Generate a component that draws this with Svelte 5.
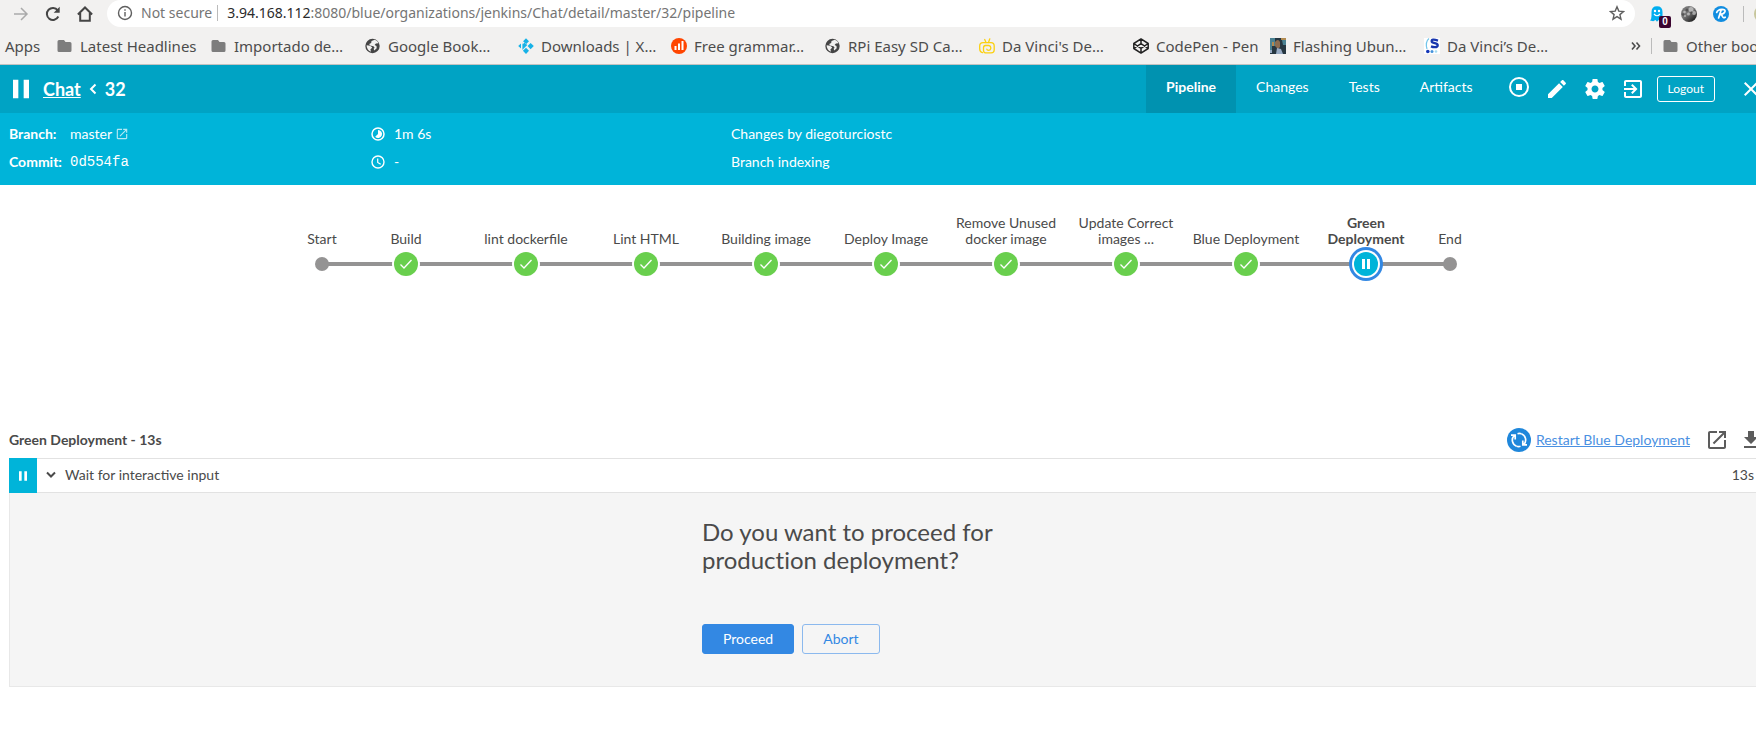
<script>
  const bookmarks = [
    { icon: 'folder', label: 'Latest Headlines' },
    { icon: 'folder', label: 'Importado de…' },
    { icon: 'globe', label: 'Google Book…' },
    { icon: 'kodi', label: 'Downloads | X…' },
    { icon: 'chart', label: 'Free grammar…' },
    { icon: 'globe', label: 'RPi Easy SD Ca…' },
    { icon: 'tv', label: "Da Vinci's De…" },
    { icon: 'codepen', label: 'CodePen - Pen' },
    { icon: 'photo', label: 'Flashing Ubun…' },
    { icon: 'sletter', label: 'Da Vinci’s De…' },
  ];

  const tabs = ['Pipeline', 'Changes', 'Tests', 'Artifacts'];
  let activeTab = $state('Pipeline');

  const stages = [
    { name: 'Start', kind: 'dot' },
    { name: 'Build', kind: 'done' },
    { name: 'lint dockerfile', kind: 'done' },
    { name: 'Lint HTML', kind: 'done' },
    { name: 'Building image', kind: 'done' },
    { name: 'Deploy Image', kind: 'done' },
    { name: 'Remove Unused docker image', kind: 'done' },
    { name: 'Update Correct images ...', kind: 'done' },
    { name: 'Blue Deployment', kind: 'done' },
    { name: 'Green Deployment', kind: 'paused' },
    { name: 'End', kind: 'dot' },
  ];

  const launch =
    'M19 19H5V5h7V3H5c-1.11 0-2 .9-2 2v14c0 1.1.89 2 2 2h14c1.1 0 2-.9 2-2v-7h-2v7zM14 3v2h3.59l-9.83 9.83 1.41 1.41L19 6.41V10h2V3h-7z';
  const pause = 'M6 19h4V5H6v14zm8-14v14h4V5h-4z';
</script>

{#snippet bookmarkIcon(kind)}
  <svg class="bm-icon" viewBox="0 0 16 16" aria-hidden="true">
    {#if kind === 'folder'}
      <path fill="#7d7d7d" d="M2 2h5l1.500 2H13q1.500 0 1.500 1.500V12.500q0 1.500-1.500 1.500H2Q.5 14 .5 12.500V3.500Q.5 2 2 2z" />
    {:else if kind === 'globe'}
      <circle cx="7.500" cy="8" r="7.200" fill="#454545" />
      <path fill="#f2f1f0" d="M1.600 7.200 5 7.700l2.200 1.500-.8 1.300-1 .8.600 2.500Q1.600 12 1.600 7.200zM6.500 3l3.300-1.300q2.800.9 3.800 3.600l-2.700.1-1.300 1.700 1.900 1 .2 2.200-2.400 2.300-.7-1.900 1-1-1.100-1.400L5 7.500 4.200 6l2-.9z" />
    {:else if kind === 'kodi'}
      <g fill="#17b2e7">
        <path d="m8 .2 3 3-3 3.100-2.900-3.100zM12.600 5l3.200 3.100-3.200 3.100-3-3.100zM8 9.800l3 3-3 3.100-3.100-3.100zM4.400 4v7.900L6 10.300 9.300 7 6.600 4.400 4.700 6.300zM3 5.500v5L.2 8z" />
      </g>
    {:else if kind === 'chart'}
      <circle cx="8" cy="8" r="8" fill="#ff4500" />
      <path stroke="#fff" stroke-width="2" d="M4.500 8v4M8 5.500V12M11.500 3v9" />
    {:else if kind === 'tv'}
      <g fill="none" stroke="#fbd010" stroke-width="1.300" stroke-linecap="round">
        <path d="M3.500 14.700Q.7 14 .7 11V8Q.7 4.800 4 4.700h8q3.200.1 3.200 3.300v4q0 2.800-3 2.900H6.500q-2-.3-2-2.700V9.700q0-2 2-2.200h3.300q2 .3 2 2.200v.7q-.2 1.800-2 1.900-1.900 0-2-1.200" />
        <path d="M5.700 1.500 7 4.500M10.800.8 9.500 4.500" />
      </g>
    {:else if kind === 'codepen'}
      <path fill="none" stroke="#222" stroke-width="1.500" stroke-linejoin="round" d="M8 .9 15.200 5.500v5L8 15.100.8 10.500v-5zM.8 5.500 8 10.300l7.200-4.800M.8 10.500 8 5.700l7.200 4.800M8 .9v4.800M8 10.300v4.800" />
    {:else if kind === 'photo'}
      <path fill="#263640" d="M0 0h16v16H0z" />
      <path fill="#4a8192" d="M0 0h5v8H2v4H0zM12 2h4v5h-3z" />
      <path fill="#8c6c50" d="M5 4q3-4 5 0v5l-2 2-3-3z" />
      <path fill="#98abc4" d="m7 10 4 1 2 5H6zM0 12h2v3H0z" />
      <path fill="#b18b52" d="M11 0h5v2h-5zM2 4h2v4H2z" />
    {:else if kind === 'sletter'}
      <path fill="#fff" d="M0 0h16v16H0z" />
      <path fill="none" stroke="#72c5ea" stroke-width="1.200" d="M5 .5Q1 4 3 11" />
      <path fill="none" stroke="#1a37ae" stroke-width="2.300" d="M14 2.600Q7.500.4 7.700 3.300c.2 2.400 6.300 1.300 6 4-.2 2.600-4.500 2-6.700 1.100" />
      <circle cx="3.800" cy="13.500" r="1.800" fill="#1437b8" /><circle cx="8" cy="13.500" r="1.500" fill="#4492dc" /><circle cx="12" cy="13.500" r="1.300" fill="#a5dcf2" />
    {/if}
  </svg>
{/snippet}

{#snippet glyph(d, size)}
  <svg class="glyph" width={size} height={size} viewBox="0 0 24 24" aria-hidden="true"><path fill="currentColor" {d} /></svg>
{/snippet}

<div class="page">
  <div class="browser">
    <div class="toolbar">
      <button class="tool muted" aria-label="Forward">
        <svg viewBox="0 0 16 16"><path d="M1 8h13M8 2l6 6-6 6" /></svg>
      </button>
      <button class="tool" aria-label="Reload">
        <svg viewBox="0 0 16 16"><path d="M13.300 10.500A6 6 0 1 1 12.700 4.300" /><path class="solid" d="M14.700.7v6h-6z" /></svg>
      </button>
      <button class="tool" aria-label="Home">
        <svg viewBox="0 0 16 16"><path d="M.9 8.500 8 1.500l7.100 7M3.200 7v7.700h9.600V7" /></svg>
      </button>
      <div class="omnibox">
        <svg class="info" viewBox="0 0 16 16" aria-hidden="true">
          <circle cx="8" cy="8" r="6.500" /><path d="M8 7v4.500M8 4.300v1.500" />
        </svg>
        <span class="security">Not secure</span>
        <span class="rule"></span>
        <span class="url"><b>3.94.168.112</b>:8080/blue/organizations/jenkins/Chat/detail/master/32/pipeline</span>
        <svg class="star" viewBox="0 0 16 16" aria-hidden="true">
          <path d="m8 1.800 1.800 4.300 4.700.4-3.600 3.100 1.100 4.600L8 11.700l-4 2.500 1.100-4.600-3.600-3.100 4.700-.4z" />
        </svg>
      </div>
      <div class="extensions">
        <span class="ext ghost">
          <svg viewBox="0 0 16 16" aria-hidden="true">
            <path fill="#00aef0" d="M2.500 6Q2.500.3 8 .3T13.500 6v8l-2 1.700L9.500 14 8 15.700 6.500 14l-2.300 1.200L1 14.500Q2.500 13 2.500 10z" />
            <circle cx="6" cy="5" r="1.200" fill="#fff" /><circle cx="10" cy="5" r="1.200" fill="#fff" />
            <path fill="none" stroke="#fff" stroke-width="1.200" d="M5 8q3 3.500 6 0" />
          </svg>
          <span class="badge">0</span>
        </span>
        <span class="ext">
          <svg viewBox="0 0 16 16" aria-hidden="true">
            <defs>
              <linearGradient id="moon" x1="0" y1="0" x2=".8" y2="1"><stop offset="0" stop-color="#777" /><stop offset=".5" stop-color="#777" /><stop offset="1" stop-color="#161616" /></linearGradient>
            </defs>
            <circle cx="8" cy="8" r="8" fill="url(#moon)" />
            <g fill="#ddd" opacity=".6"><circle cx="10" cy="3.500" r="2.500" /><circle cx="13" cy="7" r="2" /><circle cx="3.500" cy="6" r="1.300" /><circle cx="7.500" cy="8" r="1.500" /><circle cx="4" cy="10" r="1" /></g>
            <g fill="#333" opacity=".5"><circle cx="6" cy="4" r="1.500" /><circle cx="10.500" cy="6.500" r="1.200" /><circle cx="2" cy="8.500" r="1.200" /></g>
          </svg>
        </span>
        <span class="ext">
          <svg viewBox="0 0 16 16" aria-hidden="true">
            <circle cx="8" cy="8" r="8" fill="#118de0" />
            <path fill="none" stroke="#fff" stroke-width="1.700" stroke-linecap="round" stroke-linejoin="round" d="M3.700 6.500Q4.500 3.600 9 3.300q3.500 0 3 2.300-.7 2.500-4.700 2.700 1.800.4 2.200 2.200.8 2 2.700.7M8 4.500 5.600 12" />
          </svg>
        </span>
        <span class="rule"></span>
        <span class="avatar"></span>
      </div>
    </div>

    <nav class="bookmarks" aria-label="Bookmarks">
      <a href="#apps">Apps</a>
      {#each bookmarks as item}
        <a href="#bookmark">{@render bookmarkIcon(item.icon)}{item.label}</a>
      {/each}
      <span class="spacer"></span>
      <button class="more" aria-label="More bookmarks">
        <svg viewBox="0 0 10 10"><path d="m1 1.500 3 3.500-3 3.500M5.500 1.500l3 3.500-3 3.500" /></svg>
      </button>
      <span class="rule"></span>
      <a href="#other">{@render bookmarkIcon('folder')}Other boo</a>
    </nav>
  </div>

  <header class="run-header">
    {@render glyph(pause, 32)}
    <h1>
      <a href="#chat">Chat</a>
      <svg class="crumb" viewBox="0 0 8 12" aria-hidden="true"><path d="M6.500 1.500 2 6l4.500 4.500" /></svg>
      <span>32</span>
    </h1>
    <nav class="tabs" aria-label="Run">
      {#each tabs as tab}
        <a href="#{tab}" class:active={tab === activeTab} onclick={() => (activeTab = tab)}>{tab}</a>
      {/each}
    </nav>
    <div class="actions">
      <button class="icon stop" aria-label="Stop">
        <svg width="24" height="24" viewBox="0 0 24 24"><circle cx="12" cy="12" r="9" fill="none" stroke="#fff" stroke-width="2" /><path fill="#fff" d="M9 9h6v6H9z" /></svg>
      </button>
      <button class="icon" aria-label="Edit">
        {@render glyph('M3 17.250V21h3.750L17.810 9.940l-3.750-3.750L3 17.250zM20.710 7.040c.39-.39.39-1.020 0-1.410l-2.340-2.340c-.39-.39-1.020-.39-1.410 0l-1.830 1.830 3.750 3.750 1.830-1.830z', 24)}
      </button>
      <button class="icon" aria-label="Settings">
        {@render glyph('M19.430 12.980c.04-.32.07-.64.07-.98s-.03-.66-.07-.98l2.110-1.650c.19-.15.24-.42.12-.64l-2-3.460c-.12-.22-.39-.3-.61-.22l-2.490 1c-.52-.4-1.080-.73-1.690-.98l-.38-2.650C14.460 2.180 14.250 2 14 2h-4c-.25 0-.46.18-.49.42l-.38 2.650c-.61.25-1.170.59-1.690.98l-2.490-1c-.23-.09-.49 0-.61.22l-2 3.460c-.13.22-.07.49.12.64l2.110 1.650c-.04.32-.07.65-.07.98s.03.66.07.98l-2.110 1.650c-.19.15-.24.42-.12.64l2 3.460c.12.22.39.3.61.22l2.490-1c.52.4 1.080.73 1.690.98l.38 2.650c.03.24.24.42.49.42h4c.25 0 .46-.18.49-.42l.38-2.650c.61-.25 1.170-.59 1.690-.98l2.490 1c.23.09.49 0 .61-.22l2-3.460c.12-.22.07-.49-.12-.64l-2.110-1.650zM12 15.500c-1.930 0-3.500-1.570-3.500-3.500s1.570-3.500 3.500-3.500 3.500 1.570 3.500 3.500-1.570 3.500-3.500 3.500z', 24)}
      </button>
      <button class="icon" aria-label="Classic view">
        {@render glyph('M10.090 15.590L11.500 17l5-5-5-5-1.410 1.410L12.670 11H3v2h9.670l-2.580 2.590zM19 3H5c-1.110 0-2 .9-2 2v4h2V5h14v14H5v-4H3v4c0 1.100.89 2 2 2h14c1.100 0 2-.9 2-2V5c0-1.100-.9-2-2-2z', 24)}
      </button>
      <button class="logout">Logout</button>
      <button class="icon close" aria-label="Close">
        {@render glyph('M19 6.410L17.590 5 12 10.590 6.410 5 5 6.410 10.590 12 5 17.590 6.410 19 12 13.410 17.590 19 19 17.590 13.410 12z', 24)}
      </button>
    </div>
  </header>

  <section class="meta">
    <dl>
      <dt>Branch:</dt>
      <dd>master <a href="#branch" aria-label="Open branch">{@render glyph(launch, 14)}</a></dd>
      <dt>Commit:</dt>
      <dd><code>0d554fa</code></dd>
    </dl>
    <div class="times">
      <p>
        <svg width="16" height="16" viewBox="0 0 16 16" aria-hidden="true"><circle cx="8" cy="8" r="6" fill="none" stroke="#fff" stroke-width="1.500" /><path fill="#fff" d="M8 4a4 4 0 1 1-2.800 6.800L8 8z" /></svg>
        1m 6s
      </p>
      <p>
        <svg width="16" height="16" viewBox="0 0 16 16" aria-hidden="true"><g fill="none" stroke="#fff"><circle cx="8" cy="8" r="6" stroke-width="1.400" /><path stroke-width="1.200" d="M7.700 4.500v4l3 1.800" /></g></svg>
        -
      </p>
    </div>
    <div>
      <p>Changes by diegoturciostc</p>
      <p>Branch indexing</p>
    </div>
  </section>

  <ol class="graph">
    {#each stages as stage}
      <li class={stage.kind}>
        <span class="label">{stage.name}</span>
        <span class="track">
          <span class="node">
            {#if stage.kind === 'done'}
              <svg width="24" height="24" viewBox="0 0 24 24" aria-hidden="true"><path fill="none" stroke="#fff" stroke-width="1.300" d="m6.500 12.500 3.500 3.500 7.500-8" /></svg>
            {:else if stage.kind === 'paused'}
              <svg width="24" height="24" viewBox="0 0 24 24" aria-hidden="true"><path fill="#fff" d="M8 7h3v10H8zM13 7h3v10h-3z" /></svg>
            {/if}
          </span>
        </span>
      </li>
    {/each}
  </ol>

  <main>
    <div class="step-head">
      <h2>Green Deployment - 13s</h2>
      <a class="restart" href="#restart">
        <svg width="24" height="24" viewBox="0 0 24 24" aria-hidden="true">
          <circle cx="12" cy="12" r="12" fill="#1f87db" />
          <g fill="none" stroke="#fff" stroke-width="1.700">
            <path d="M9.500 18.200A6.600 6.600 0 0 1 7 7.700M4 7.200h4.200v4.300M14.500 5.800A6.600 6.600 0 0 1 17 16.300M20 16.900h-4.200v-4.400" />
            <path d="M10.500 5.700q2-.6 4 .1M13.500 18.300q-2 .6-4-.1" />
          </g>
        </svg>
        <span>Restart Blue Deployment</span>
      </a>
      <a class="tool-link" href="#open" aria-label="Open log">{@render glyph(launch, 24)}</a>
      <a class="tool-link last" href="#download" aria-label="Download log">{@render glyph('M19 9h-4V3H9v6H5l7 7 7-7zM5 18v2h14v-2H5z', 24)}</a>
    </div>

    <div class="step">
      <span class="status">{@render glyph(pause, 16)}</span>
      <button class="toggle">
        <svg width="10" height="8" viewBox="0 0 10 8" aria-hidden="true"><path d="m1 1.500 4 4 4-4" /></svg>
        <span>Wait for interactive input</span>
      </button>
      <span class="duration">13s</span>
    </div>

    <div class="panel">
      <form onsubmit={(e) => e.preventDefault()}>
        <h3>Do you want to proceed for production deployment?</h3>
        <div class="buttons">
          <button class="primary" type="submit">Proceed</button>
          <button class="secondary" type="button">Abort</button>
        </div>
      </form>
    </div>
  </main>
</div>

<style>
  :global(body) {
    overflow-x: hidden;
    background: #fff;
  }
  .page {
    width: calc(100% + 16px);
    font: 14px/20px Lato, sans-serif;
    color: #4a4a4a;
  }
  .page :is(h1, h2, h3, p, dl, dd, ol) {
    margin: 0;
    padding: 0;
  }
  a {
    color: inherit;
    text-decoration: none;
  }
  button {
    padding: 0;
    border: 0;
    background: none;
    color: inherit;
    font: inherit;
    cursor: pointer;
  }
  svg {
    display: block;
    flex: none;
  }

  .browser {
    background: #f2f1f0;
    border-bottom: 1px solid #c3c2c1;
    color: #4c4c4c;
    font: 14px/20px "Noto Sans", "Open Sans", sans-serif;
  }
  .toolbar {
    display: flex;
    align-items: center;
    height: 27px;
    padding-left: 13px;
    gap: 16px;
  }
  .tool svg {
    width: 16px;
    height: 16px;
    fill: none;
    stroke: #454545;
    stroke-width: 2;
  }
  .tool .solid {
    fill: #454545;
    stroke: none;
  }
  .muted svg {
    stroke: #aaa;
    stroke-width: 1.500;
  }
  .omnibox {
    flex: 1;
    display: flex;
    align-items: center;
    height: 26px;
    margin-left: -2px;
    padding: 0 10px 1px;
    border-radius: 14px;
    background: #fff;
    color: #757575;
    white-space: nowrap;
  }
  .info,
  .star {
    width: 16px;
    height: 16px;
    fill: none;
    stroke: #5f5f5f;
    stroke-width: 1.400;
  }
  .security {
    margin-left: 8px;
  }
  .rule {
    flex: none;
    width: 1px;
    height: 16px;
    background: #bbb;
  }
  .omnibox .rule {
    margin: 0 9px 0 5px;
  }
  .url {
    flex: 1;
  }
  .url b {
    color: #2b2b2b;
    font-weight: 400;
  }
  .extensions {
    display: flex;
    align-items: center;
    gap: 16px;
    margin-left: -2px;
  }
  .ext svg {
    width: 16px;
    height: 16px;
  }
  .ghost {
    position: relative;
  }
  .badge {
    position: absolute;
    left: 10px;
    top: 10px;
    width: 12px;
    height: 12px;
    border-radius: 2px;
    background: #3b0530;
    color: #fff;
    font: bold 10px/12px "Liberation Sans", sans-serif;
    text-align: center;
  }
  .extensions .rule {
    margin-left: -2px;
  }
  .avatar {
    width: 18px;
    height: 18px;
    margin-left: -6px;
    border-radius: 50%;
    background: #c7c69c;
  }
  .bookmarks {
    display: grid;
    grid-template-columns: 52px 154px 154px 153px 153px repeat(3, 154px) 137px repeat(2, 154px) 1fr 20px 12px 109px;
    align-items: center;
    height: 37px;
    padding-left: 5px;
    font-size: 15px;
    white-space: nowrap;
  }
  .bookmarks a {
    display: flex;
    align-items: center;
    gap: 7px;
  }
  .bm-icon {
    width: 16px;
    height: 16px;
  }
  .more svg {
    width: 10px;
    height: 10px;
    fill: none;
    stroke: #4c4c4c;
    stroke-width: 1.600;
  }

  .run-header {
    display: flex;
    align-items: center;
    height: 48px;
    padding: 0 9px 0 5px;
    background: #00a3c4;
    color: #fff;
  }
  .page h1 {
    display: flex;
    flex: 1;
    align-items: center;
    padding-left: 6px;
    font-size: 18px;
    line-height: 24px;
  }
  h1 a {
    text-decoration: underline;
  }
  .crumb {
    width: 8px;
    height: 12px;
    margin: 0 8px;
    fill: none;
    stroke: #fff;
    stroke-width: 2;
  }
  .tabs {
    display: flex;
  }
  .tabs a {
    height: 48px;
    padding: 0 20px;
    line-height: 44px;
  }
  .tabs .active {
    background: #0092b0;
    font-weight: 700;
  }
  .actions {
    display: flex;
    align-items: center;
    gap: 14px;
    margin-left: 14px;
  }
  .stop {
    padding-bottom: 4px;
  }
  .logout {
    height: 26px;
    margin-left: -2px;
    padding: 0 10px;
    border: 1px solid #fff;
    border-radius: 3px;
    font-size: 12px;
  }
  .close {
    margin-left: 10px;
  }

  .meta {
    display: grid;
    grid-template-columns: 361px 361px 1fr;
    padding: 7px 9px 9px;
    background: #00b4d9;
    color: #fff;
    line-height: 28px;
  }
  dl {
    display: grid;
    grid-template-columns: 61px 1fr;
  }
  dt {
    font-weight: 700;
  }
  dd {
    display: flex;
    align-items: center;
    gap: 3px;
  }
  dd a {
    opacity: 0.7;
  }
  code {
    font: 14px/28px "Liberation Mono", monospace;
  }
  .times p {
    display: flex;
    align-items: center;
    gap: 8px;
  }

  .page .graph {
    display: flex;
    justify-content: center;
    padding: 30px 0 143px;
    list-style: none;
    line-height: 16px;
  }
  .graph li {
    width: 120px;
  }
  .graph .dot {
    width: 48px;
  }
  .label {
    display: flex;
    align-items: flex-end;
    justify-content: center;
    height: 32px;
    padding: 0 5px;
    text-align: center;
  }
  .dot .label {
    padding: 0;
  }
  .paused .label {
    font-weight: 700;
  }
  .track {
    display: flex;
    align-items: center;
    justify-content: center;
    height: 34px;
    background: linear-gradient(#949393, #949393) center / 100% 4px no-repeat;
  }
  .dot:first-child .track {
    background-position: right center;
    background-size: 50% 4px;
  }
  .dot:last-child .track {
    background-position: left center;
    background-size: 50% 4px;
  }
  .node {
    width: 24px;
    height: 24px;
    border-radius: 50%;
    background: #69cf4d;
    box-shadow: 0 0 0 2px #fff;
  }
  .paused .node {
    background: #00b4d9;
    box-shadow: 0 0 0 2px #fff, 0 0 0 5px #3388e3;
  }
  .dot .node {
    width: 14px;
    height: 14px;
    background: #949393;
    box-shadow: none;
  }

  main {
    padding: 0 9px;
  }
  .step-head {
    display: flex;
    align-items: center;
    height: 32px;
    padding-bottom: 2px;
  }
  h2 {
    flex: 1;
    font-size: 14px;
    line-height: 20px;
  }
  .restart {
    display: flex;
    align-items: center;
    gap: 5px;
    color: #4a90e2;
  }
  .restart span {
    text-decoration: underline;
  }
  .tool-link {
    margin-left: 15px;
    color: #5c5c5c;
  }
  .last {
    margin-left: 10px;
  }
  .step {
    display: flex;
    align-items: center;
    height: 33px;
    border: solid #e2e2e2;
    border-width: 1px 0;
  }
  .status {
    display: grid;
    place-items: center;
    width: 28px;
    height: 35px;
    background: #00b4d9;
    color: #fff;
  }
  .toggle {
    display: flex;
    flex: 1;
    align-items: center;
    gap: 9px;
    padding: 0 0 2px 9px;
  }
  .toggle svg {
    fill: none;
    stroke: #4a4a4a;
    stroke-width: 2;
  }
  .duration {
    padding: 0 9px 2px 0;
  }
  .panel {
    padding: 25px 0 32px;
    border: solid #e8e8e8;
    border-width: 0 1px 1px;
    background: #f5f5f5;
  }
  form {
    width: 368px;
    max-width: 100%;
    margin: 0 auto;
  }
  h3 {
    font-size: 24px;
    font-weight: 400;
    font-variant-ligatures: none;
    line-height: 28px;
  }
  .buttons {
    display: flex;
    gap: 8px;
    margin-top: 50px;
  }
  .buttons button {
    height: 30px;
    padding: 0 20px;
    border: 1px solid #3388e3;
    border-radius: 3px;
  }
  .primary {
    background: #3388e3;
    color: #fff;
  }
  .buttons .secondary {
    border-color: #8bb9ee;
    color: #3388e3;
  }
</style>
